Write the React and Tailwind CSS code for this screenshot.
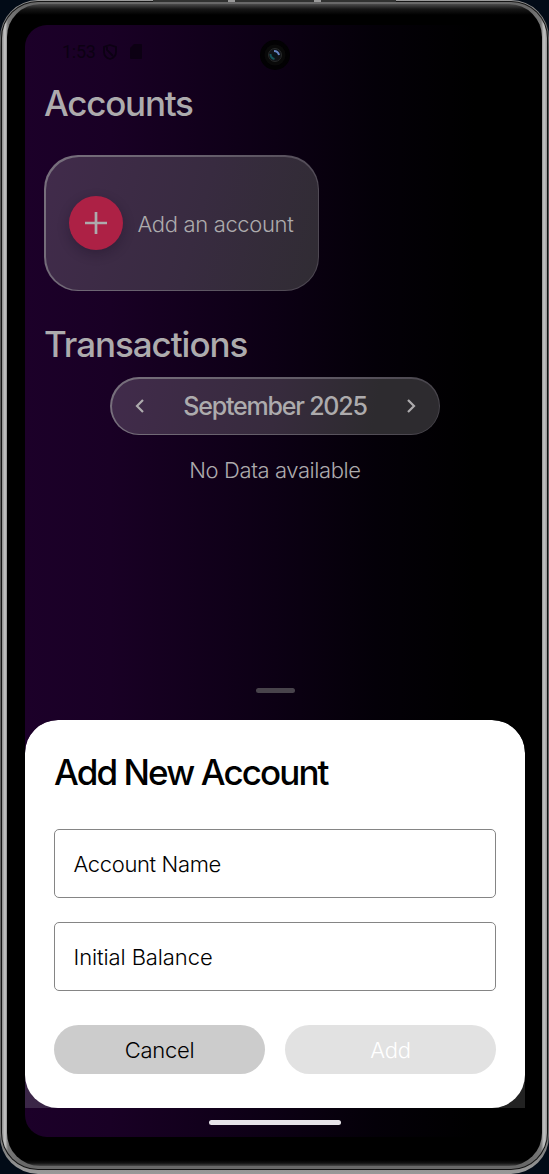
import React from "react";

function StatusBar() {
  return (
    <div className="relative flex h-[53px] items-center pl-[37px] text-[#0c0013]">
      <span className="text-[18px] leading-none font-[Roboto] font-normal tracking-[-0.3px]">1:53</span>
      <svg className="ml-[7px] h-4 w-[14px]" viewBox="0 0 14 16" fill="none" stroke="currentColor" strokeWidth="1.8">
        <path d="M7 1 13 3v5c0 3.500-2.500 6-6 7-3.500-1-6-3.500-6-7V3zM4 3v3l6 6" />
      </svg>
      <svg className="ml-[13px] h-[15px] w-3" viewBox="0 0 12 15" fill="currentColor">
        <path d="M4 0h7q1 0 1 1v13q0 1-1 1H1q-1 0-1-1V4z" />
      </svg>
      <div className="absolute left-[235px] top-[15px] flex size-[30px] items-center justify-center rounded-full bg-[#020103]">
        <svg className="size-[26px]" viewBox="0 0 26 26" fill="none">
          <circle cx="13" cy="13" r="10.500" fill="#090909" />
          <circle cx="13" cy="13" r="6.500" fill="#111318" stroke="#262828" />
          <path d="M12 9q4 0 5 4" stroke="#6685c5" strokeWidth="2" />
          <path d="M8.500 12q0 4 4 5" stroke="#13545a" strokeWidth="2" />
          <circle cx="13" cy="13" r="2.300" fill="#07141b" />
        </svg>
      </div>
    </div>
  );
}

function Field({ label, spacing }) {
  return (
    <div className="flex h-[69px] items-center rounded-[5px] border-[1.5px] border-[#858585] px-[18.5px] pt-[2px] text-[22px] font-light text-black">
      <span className={spacing}>{label}</span>
    </div>
  );
}

function Chevron({ d }) {
  return (
    <svg className="h-[14px] w-[9px]" viewBox="0 0 9 14" fill="none" stroke="#adabad" strokeWidth="2.200">
      <path d={d} />
    </svg>
  );
}

function AccountSheet() {
  return (
    <div className="bg-[linear-gradient(90deg,#3b2648,#222_85%)] [clip-path:inset(0_round_33px_33px_0_0)]">
      <div className="flex h-[388px] flex-col rounded-[33px] bg-white px-[29px] pt-[31px]">
        <h2 className="h-[42px] text-[35px] leading-[42px] font-[460] tracking-[-1.9px] whitespace-nowrap text-black">Add New Account</h2>
        <div className="mt-[36px] flex flex-col gap-[24px]">
          <Field label="Account Name" spacing="tracking-[-0.36px]" />
          <Field label="Initial Balance" spacing="tracking-[-0.1px]" />
        </div>
        <div className="mt-[34px] grid grid-cols-2 gap-5 text-[22px] font-light">
          <button className="h-[49px] rounded-full bg-[#cccccc] pt-[2px] tracking-[-0.3px] text-black">Cancel</button>
          <button className="h-[49px] rounded-full bg-[#e2e2e2] pt-[2px] tracking-[-0.3px] text-white">Add</button>
        </div>
      </div>
    </div>
  );
}

function Screen() {
  return (
    <div className="flex h-[1112px] w-[500px] flex-col overflow-hidden rounded-[22px] bg-[linear-gradient(90deg,#1c0029_0%,#190025_17%,#0c0014_50%,#040008_70%,#000_90%)]">
      <StatusBar />
      <main className="flex h-[642px] flex-col px-[19px] text-[#adabad]">
        <h1 className="h-[50px] text-[35px] leading-[50px] font-[460] tracking-[-1.25px]">Accounts</h1>
        <div className="mt-[27px] h-[136px] w-[275px] rounded-[34px] bg-[linear-gradient(110deg,#78707d,#68606e_45%,#4b454f)] p-[1.500px]">
          <div className="flex h-full items-center rounded-[33px] bg-[linear-gradient(105deg,#412b4b,#382b40_55%,#302c33)] pl-[23px]">
            <div className="flex size-[54px] items-center justify-center rounded-full bg-[#ad2145] shadow-[0_4px_12px_rgba(20,10,30,0.3)]">
              <svg className="size-[22px]" viewBox="0 0 22 22" stroke="#adabad" strokeWidth="2.700">
                <path d="M11 0v22M0 11h22" />
              </svg>
            </div>
            <span className="ml-[15px] pt-[2px] text-[22px] font-light tracking-[-0.35px] whitespace-nowrap">Add an account</span>
          </div>
        </div>
        <h1 className="mt-[28px] h-[50px] text-[35px] leading-[50px] font-[460] tracking-[-1.05px]">Transactions</h1>
        <div className="mt-[8px] h-[58px] w-[330px] self-center rounded-full bg-[linear-gradient(105deg,#78707d,#5f5964_60%,#46434a)] p-[1.500px]">
          <div className="flex h-full items-center justify-between rounded-full bg-[linear-gradient(100deg,#412b4b,#372b3d_50%,#2d2b2f_80%)] px-[23px]">
            <Chevron d="M8 1 2 7l6 6" />
            <span className="pt-[2px] text-[25px] font-[460] tracking-[-1.2px] whitespace-nowrap">September 2025</span>
            <Chevron d="m1 1 6 6-6 6" />
          </div>
        </div>
        <p className="mt-[19px] text-center text-[22px] leading-[33px] font-light tracking-[-0.4px]">No Data available</p>
        <div className="mt-auto mb-[27px] h-[5px] w-[39px] self-center rounded-full bg-[#48434b]" />
      </main>
      <AccountSheet />
      <div className="flex h-[29px] items-center justify-center">
        <div className="h-[5px] w-[132px] rounded-full bg-[#e7e4e9]" />
      </div>
    </div>
  );
}

export default function App() {
  return (
    <div className="h-[1174px] w-[549px] bg-[#020b17] font-['Inter',sans-serif]">
      <div className="relative h-full rounded-[38px] bg-[linear-gradient(180deg,#999,#555_4%,#6c6c6c_96%,#999)] px-[1px] pt-[1px] pb-[4px]">
        <div className="absolute top-0 left-[153px] flex h-[2px] w-[243px] justify-between bg-[#303130] px-[75px]">
          <div className="w-[7px] bg-[#999]" />
          <div className="w-[7px] bg-[#999]" />
        </div>
        <div className="h-full rounded-[37px] bg-[#151515] p-[1px]">
          <div className="h-full rounded-[36px] bg-[linear-gradient(90deg,#8a8a8a,#c9c9c9_3px,#777_6px,#686868_20px,#686868_525px,#777_539px,#c5c5c5_542px,#999)] px-[5px] pt-[2px] pb-[3px]">
            <div className="h-full rounded-[33px] bg-[linear-gradient(180deg,#4b4b4b,#161616_5px,#000_11px,#000_1156px,#111_1159px,#484848)] pt-[21px] pl-[18px]">
              <Screen />
            </div>
          </div>
        </div>
      </div>
    </div>
  );
}
